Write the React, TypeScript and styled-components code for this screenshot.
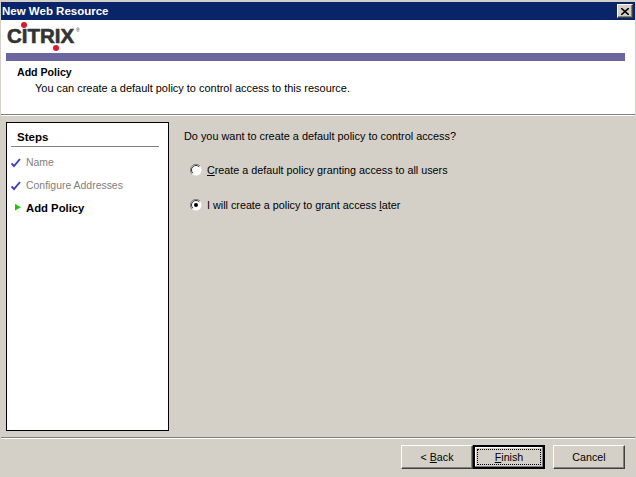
import React from "react";
import styled, { createGlobalStyle } from "styled-components";

const GlobalStyle = createGlobalStyle`
  html, body {
    margin: 0;
    padding: 0;
    background: #d4d0c8;
  }
  body {
    font-family: "Liberation Sans", Arial, sans-serif;
    font-size: 11px;
    color: #000;
  }
`;

const Window = styled.div`
  width: 636px;
  height: 477px;
  box-sizing: border-box;
  padding: 2px 1px 0 1px;
  display: flex;
  flex-direction: column;
  background: #d4d0c8;
  overflow: hidden;
`;

const TitleBar = styled.div`
  height: 18px;
  flex: none;
  background: #0a246a;
  display: flex;
  align-items: center;
  justify-content: space-between;
  padding: 0 2px 0 1px;
  color: #fff;
  font-weight: 700;
  font-size: 11.5px;
`;

const CloseButton = styled.button`
  width: 16px;
  height: 14px;
  padding: 0;
  display: flex;
  align-items: center;
  justify-content: center;
  background: #d4d0c8;
  border: 1px solid;
  border-color: #fff #404040 #404040 #fff;
  box-shadow: inset -1px -1px 0 #808080;
`;

const Header = styled.header`
  height: 95px;
  flex: none;
  box-sizing: border-box;
  background: #fff;
  padding: 0 10px 0 5px;
  border-bottom: 1px solid #808080;
  box-shadow: 0 1px 0 #fff;
`;

const LogoRow = styled.div`
  height: 33px;
  box-sizing: border-box;
  padding-bottom: 4px;
  display: flex;
  align-items: flex-end;
`;

const Logo = styled.div`
  position: relative;
  margin-left: 1px;
  height: 26px;
  font-weight: 700;
  font-size: 20.5px;
  line-height: 26px;
  color: #333333;
  -webkit-text-stroke: 0.6px #333333;
`;

const LogoDot = styled.span<{ $left: number; $top: number }>`
  position: absolute;
  left: ${(p) => p.$left}px;
  top: ${(p) => p.$top}px;
  width: 6px;
  height: 6px;
  border-radius: 50%;
  background: #e0182d;
`;

const Registered = styled.span`
  position: absolute;
  left: 69px;
  top: 5px;
  font-size: 5px;
  line-height: 5px;
  font-weight: 400;
  -webkit-text-stroke: 0;
`;

const Band = styled.div`
  height: 8px;
  background: #6c66a0;
`;

const HeadTitle = styled.div`
  margin: 4px 0 0 11px;
  font-weight: 700;
  font-size: 10.6px;
  line-height: 14px;
`;

const HeadText = styled.div`
  margin: 2px 0 0 29px;
  font-size: 10.96px;
  line-height: 14px;
`;

const Body = styled.main`
  flex: 1;
  min-height: 0;
  display: flex;
  gap: 15px;
  padding: 7px 0 6px 5px;
  border-bottom: 1px solid #808080;
  box-shadow: 0 1px 0 #fff;
`;

const StepsPanel = styled.aside`
  width: 163px;
  flex: none;
  box-sizing: border-box;
  background: #fff;
  border: 1px solid #000;
  padding: 0 9px 0 4px;
`;

const StepsTitle = styled.div`
  height: 24px;
  line-height: 28px;
  box-sizing: border-box;
  padding-left: 6px;
  font-weight: 700;
  font-size: 11.5px;
  border-bottom: 1px solid #808080;
  margin-bottom: 3px;
`;

const StepRow = styled.div<{ $active?: boolean }>`
  height: 23px;
  box-sizing: border-box;
  padding-top: ${(p) => (p.$active ? 0 : 2)}px;
  display: flex;
  align-items: center;
  gap: 4px;
  color: ${(p) => (p.$active ? "#000" : "#808080")};
  font-weight: ${(p) => (p.$active ? 700 : 400)};
  font-size: ${(p) => (p.$active ? "11.3px" : "10.45px")};
`;

const StepIcon = styled.svg`
  width: 11px;
  height: 11px;
  flex: none;
`;

const Content = styled.section`
  flex: 1;
  padding-top: 7px;
`;

const Question = styled.div`
  font-size: 10.88px;
  line-height: 14px;
  margin-bottom: 20px;
`;

const Option = styled.label`
  display: flex;
  align-items: center;
  gap: 5px;
  height: 14px;
  margin: 0 0 21px 6px;
  font-size: 10.78px;
`;

const RadioIcon = styled.svg`
  width: 12px;
  height: 12px;
  flex: none;
`;

const Footer = styled.footer`
  height: 39px;
  flex: none;
  box-sizing: border-box;
  padding: 7px 10px 0 0;
  display: flex;
  justify-content: flex-end;
`;

const BackFinish = styled.div`
  display: flex;
  margin-right: 8px;
`;

const Button = styled.button`
  width: 72px;
  height: 24px;
  padding: 0;
  font: inherit;
  font-size: 10.7px;
  color: #000;
  background: #d4d0c8;
  border: 1px solid;
  border-color: #fff #404040 #404040 #fff;
  box-shadow: inset -1px -1px 0 #808080;
`;

const DefaultButton = styled(Button)`
  position: relative;
  border: 2px solid #000;
  box-shadow: inset -1px -1px 0 #808080, inset 1px 1px 0 #fff;
  &::after {
    content: "";
    position: absolute;
    inset: 2px;
    border: 1px dotted #000;
  }
`;

const Check = () => (
  <StepIcon viewBox="0 0 11 11">
    <path d="M0.5 6.5 L3 9 L9 2" fill="none" stroke="#3c3cc4" strokeWidth="1.9" />
  </StepIcon>
);

const Arrow = () => (
  <StepIcon viewBox="0 0 11 11">
    <path d="M4 2 L10 5.2 L4 8.4 Z" fill="#22c40a" />
  </StepIcon>
);

const Radio = ({ checked }: { checked?: boolean }) => (
  <RadioIcon viewBox="0 0 12 12">
    <circle cx="6" cy="6" r="5.5" fill="#fff" />
    <path d="M10 2 A5.5 5.5 0 0 0 2 10" fill="none" stroke="#808080" strokeWidth="1" />
    <path d="M9.2 2.8 A4.5 4.5 0 0 0 2.8 9.2" fill="none" stroke="#303030" strokeWidth="1" />
    {checked && <circle cx="6" cy="6" r="2" fill="#000" />}
  </RadioIcon>
);

export default function App() {
  return (
    <Window>
      <GlobalStyle />
      <TitleBar>
        <span>New Web Resource</span>
        <CloseButton aria-label="Close">
          <svg width="8" height="7" viewBox="0 0 8 7">
            <path d="M0 0 L8 7 M8 0 L0 7" stroke="#000" strokeWidth="1.6" />
          </svg>
        </CloseButton>
      </TitleBar>
      <Header>
        <LogoRow>
          <Logo>
            CITRIX
            <LogoDot $left={14} $top={-1} />
            <LogoDot $left={46} $top={22} />
            <Registered>®</Registered>
          </Logo>
        </LogoRow>
        <Band />
        <HeadTitle>Add Policy</HeadTitle>
        <HeadText>You can create a default policy to control access to this resource.</HeadText>
      </Header>
      <Body>
        <StepsPanel>
          <StepsTitle>Steps</StepsTitle>
          <StepRow>
            <Check />
            Name
          </StepRow>
          <StepRow>
            <Check />
            Configure Addresses
          </StepRow>
          <StepRow $active>
            <Arrow />
            Add Policy
          </StepRow>
        </StepsPanel>
        <Content>
          <Question>Do you want to create a default policy to control access?</Question>
          <Option>
            <Radio />
            <span>
              <u>C</u>reate a default policy granting access to all users
            </span>
          </Option>
          <Option>
            <Radio checked />
            <span>
              I will create a policy to grant access <u>l</u>ater
            </span>
          </Option>
        </Content>
      </Body>
      <Footer>
        <BackFinish>
          <Button>
            &lt; <u>B</u>ack
          </Button>
          <DefaultButton>
            <u>F</u>inish
          </DefaultButton>
        </BackFinish>
        <Button>Cancel</Button>
      </Footer>
    </Window>
  );
}
